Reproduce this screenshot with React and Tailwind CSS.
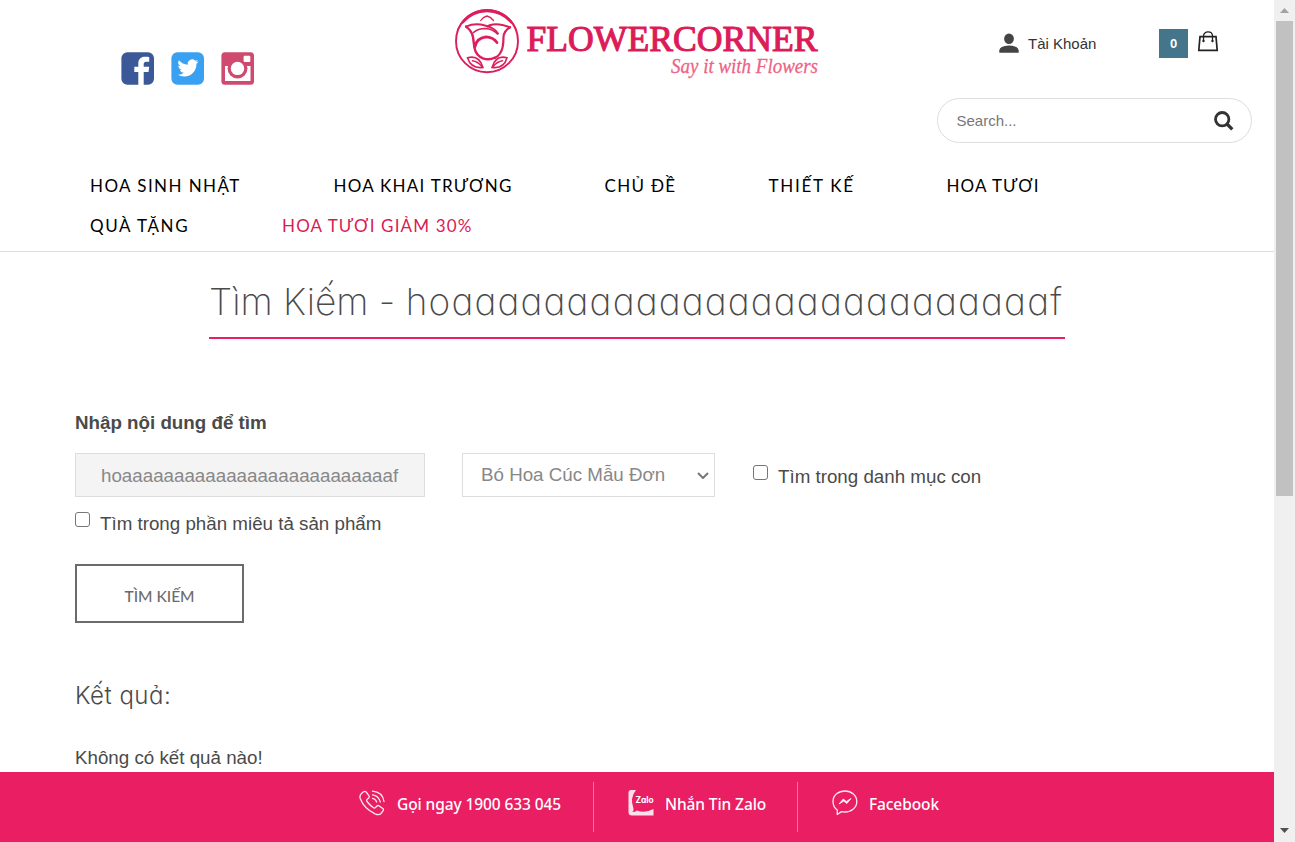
const navRows = [
  [
    { label: "HOA SINH NHẬT", cls: "w-[243.5px] text-black tracking-[1.42px]" },
    { label: "HOA KHAI TRƯƠNG", cls: "w-[271px] text-black tracking-[1.25px]" },
    { label: "CHỦ ĐỀ", cls: "w-[164px] text-black tracking-[1.3px]" },
    { label: "THIẾT KẾ", cls: "w-[178px] text-black tracking-[1.7px]" },
    { label: "HOA TƯƠI", cls: "w-[120px] text-black tracking-[1.1px]" },
  ],
  [
    { label: "QUÀ TẶNG", cls: "w-[192px] text-black tracking-[1.6px]" },
    { label: "HOA TƯƠI GIẢM 30%", cls: "w-[220px] text-[#d81b53] tracking-[1.15px]" },
  ],
];

function Social() {
  return (
    <div className="flex w-[455px] gap-4 pl-[121px] pt-[52px]">
      <svg width="34" height="34" viewBox="0 0 34 34">
        <rect x="0.4" y="0.2" width="32.600" height="32.600" rx="6" fill="#3b5998" />
        <path d="M17.300 33V20H13.300V14.700H17.300V11.500C17.300 7 19.800 4.700 24 4.700C26 4.700 27.500 4.900 28.200 5V9.800H25.500C23.300 9.800 22.700 10.800 22.700 12.300V14.700H28.200L27.500 20H22.700V33z" fill="#fff" />
      </svg>
      <svg width="34" height="34" viewBox="0 0 34 34">
        <rect x="0.4" y="0.2" width="32.600" height="32.600" rx="6" fill="#3aa1f2" />
        <g transform="translate(6.500 5.400) scale(.88)">
          <path fill="#fff" d="M23.950 4.570a10 10 0 0 1-2.820.770 4.960 4.960 0 0 0 2.160-2.720c-.950.550-2 .950-3.130 1.180a4.920 4.920 0 0 0-8.380 4.480C7.690 8.090 4.070 6.130 1.640 3.160a4.920 4.920 0 0 0 1.520 6.570 4.900 4.900 0 0 1-2.230-.610v.060a4.920 4.920 0 0 0 3.950 4.830 4.990 4.990 0 0 1-2.210.080 4.940 4.940 0 0 0 4.600 3.420A9.870 9.870 0 0 1 0 19.540a13.990 13.990 0 0 0 7.560 2.210c9.050 0 14-7.500 14-13.980 0-.210 0-.420-.020-.630a9.940 9.940 0 0 0 2.410-2.570z" />
        </g>
      </svg>
      <svg width="34" height="34" viewBox="0 0 34 34">
        <rect x="0.4" y="0.2" width="32.600" height="32.600" rx="3.500" fill="#cf4a6e" />
        <path d="M4 14H8V17H26V14H29.500V29H4z" fill="#fff" />
        <circle cx="16.500" cy="16.400" r="10" fill="#cf4a6e" />
        <circle cx="16.500" cy="16.400" r="6.700" fill="#fff" />
        <rect x="22.600" y="3.800" width="6.700" height="6.300" rx="1" fill="#fff" />
      </svg>
    </div>
  );
}

function Logo() {
  return (
    <svg width="370" height="96" viewBox="455 0 370 96">
      <path d="M456 33A32 32 0 0 1 518 33A33.200 33.200 0 0 0 456 33z" fill="#dc1f5c" />
      <g fill="none" stroke="#dc1f5c" strokeLinecap="round">
        <circle cx="487" cy="41.200" r="31" strokeWidth="1.900" />
        <path d="M463 22.500A31.500 31.500 0 0 1 511 22.500" strokeWidth="2.600" transform="translate(0 -.5)" />
        <path d="M480.700 20.500Q483 17 487 16Q491 17 493.500 20.500" strokeWidth="1.300" />
        <path d="M466 26.600Q475 22.500 485 25.500Q494 27.500 498 33.500" strokeWidth="2" />
        <path d="M510 27.300Q500 23.500 493 24.500Q489 25 487.500 26.500" strokeWidth="2" />
        <path d="M466 26.600Q472 31 473 37L474.500 48Q476 55.500 483 58.300Q489 60.500 495 57.500" strokeWidth="2.400" />
        <path d="M510 27.300Q504 31 503.500 37Q503.500 49 500 53.500Q498 56.500 495 58" strokeWidth="2.200" />
        <path d="M473.500 32.500Q478 28.500 485 28.500Q493 29 497.500 34" strokeWidth="1.600" />
        <path d="M475 46.500Q476.500 38 486 36.800Q493 37 497 42.500" strokeWidth="2.800" />
        <path d="M467.500 57.800Q479 54.500 483 67.500Q471 69 467.500 57.800ZM472.500 60.800Q477.500 61.500 482 66.500" strokeWidth="1.600" />
        <path d="M507 57.800Q496 54.500 492 67.500Q504 69 507 57.800ZM502.500 60.800Q497.500 61.500 493 66.500" strokeWidth="1.600" />
      </g>
      <text x="526.500" y="51.200" textLength="291" lengthAdjust="spacingAndGlyphs" fill="#dc1c58" stroke="#dc1c58" strokeWidth="1.100" className="font-['Liberation_Serif',serif] text-[35px]">FLOWERCORNER</text>
      <text x="671" y="73" textLength="147" lengthAdjust="spacingAndGlyphs" fill="#ee6384" stroke="#ee6384" strokeWidth=".3" className="font-['Liberation_Serif',serif] text-[22px] italic">Say it with Flowers</text>
    </svg>
  );
}

function Account() {
  return (
    <div className="flex w-[315px] flex-col">
      <div className="flex h-[98px] pl-[61px] pt-[29px]">
        <svg className="mt-[3px]" width="21" height="22" viewBox="0 0 21 22" fill="#444">
          <ellipse cx="11" cy="6.800" rx="4.900" ry="5.200" />
          <path d="M1.300 20.800v-2.300Q1.500 14 11 13.500Q20.500 14 20.700 18.500v2.300z" />
        </svg>
        <span className="ml-[9px] w-[131px] text-[15px] leading-[30px] text-[#333]">Tài Khoản</span>
        <span className="flex h-[29px] w-[29px] items-center justify-center bg-[#44758b] text-[13px] font-bold text-white">0</span>
        <svg className="ml-[10px] mt-px" width="20" height="22" viewBox="0 0 20 22" fill="none" stroke="#222">
          <path d="M2 6.700H18L19.200 20.300H.8z" strokeWidth="1.700" />
          <path d="M5.500 11.500V6C5.500 .5 14.500 .5 14.500 6v5.500" strokeWidth="1.300" />
          <circle cx="5.500" cy="11" r=".8" fill="#222" />
          <circle cx="14.500" cy="11" r=".8" fill="#222" />
        </svg>
      </div>
      <div className="flex h-[45px] items-center justify-between rounded-full border border-[#ddd] pl-[18.500px] pr-[17px]">
        <span className="pt-[2px] text-[15px] text-[#777]">Search...</span>
        <svg width="20" height="20" viewBox="0 0 20 20" fill="none" stroke="#333" strokeWidth="2.800">
          <circle cx="8.200" cy="8.200" r="6.700" />
          <path d="M13 13L18.300 18.300" strokeWidth="3.300" />
        </svg>
      </div>
    </div>
  );
}

function Check({ children, className }) {
  return (
    <label className={className}>
      <span className="h-[15px] w-[15px] shrink-0 rounded-[3px] border border-[#767676] bg-white" />
      <span className="ml-[10px] whitespace-nowrap text-[18.750px] leading-[28px]">{children}</span>
    </label>
  );
}

function PhoneIcon() {
  return (
    <svg width="26" height="26" viewBox="0 0 26 26" fill="none" stroke="#fff" strokeOpacity=".9" strokeWidth="1.300" strokeLinecap="round" strokeLinejoin="round">
      <path d="M2.500 3.500L4.500 1.800Q6 .8 7.200 2L10 5.800Q10.800 7 9.700 8L8 9.500Q7.300 10.300 8 11.500Q11 15.500 14.500 17.800Q15.600 18.500 16.500 17.500L18 16Q19 15 20.200 15.900L23.800 18.500Q25 19.500 24 20.800L22 23.500Q20 25.500 16 23.800Q5 18.500 1.200 8.500Q.3 5.500 2.500 3.500Z" />
      <path d="M13.500 1.200Q23.500 2 25 11.500M13.500 4.800Q19.500 5.500 21.300 12M13.500 8.300Q16.500 8.800 17.700 12" />
    </svg>
  );
}

function ZaloIcon() {
  return (
    <svg width="26" height="26" viewBox="0 0 26 26">
      <path d="M3 0H8Q1.500 8 5.500 18.500Q6 20 4.500 22Q7 22 9 20.500Q17 23.500 25.500 19V25.500H4Q.5 25.500.5 22V3Q.5 0 3 0Z" fill="#fff" fillOpacity=".86" />
      <text x="7.500" y="13.200" textLength="18" lengthAdjust="spacingAndGlyphs" fill="#fff" className="font-[Inter,sans-serif] text-[8.500px] font-bold [font-feature-settings:'cv11']">Zalo</text>
    </svg>
  );
}

function MessengerIcon() {
  return (
    <svg width="26" height="26" viewBox="0 0 26 26" fill="none" stroke="#fff" strokeOpacity=".9" strokeWidth="1.300" strokeLinejoin="round">
      <path d="M5.300 20Q1 17 1 11.500C1 5 6.500 1 13 1S24.800 5.500 24.800 11.500S19.500 22 13 22Q11 22 9.500 21.600L5.200 24.500Z" />
      <path d="M7 14L11.300 9L14.300 11.500L19 8.500L14.800 13.600L11.800 11.100Z" fill="#fff" strokeWidth=".8" />
    </svg>
  );
}

export default function App() {
  return (
    <div className="flex h-[842px] w-[1295px] overflow-hidden bg-white font-['Liberation_Sans',Arial,sans-serif] text-[#4a4a4a]">
      <div className="flex w-[1274px] flex-col">
        <header className="h-[252px] border-b border-[#ddd]">
          <div className="flex h-[166px]">
            <Social />
            <div className="w-[482px]">
              <Logo />
            </div>
            <Account />
          </div>
          <nav className="pl-[90px] font-[Lato,'Open_Sans',sans-serif] text-[17px]">
            {navRows.map((row, i) => (
              <div key={i} className="flex h-10 items-center whitespace-nowrap">
                {row.map((item) => (
                  <a key={item.label} className={item.cls}>{item.label}</a>
                ))}
              </div>
            ))}
          </nav>
        </header>

        <main className="flex h-[520px] flex-col overflow-hidden pl-[75px]">
          <h1 className="ml-[134px] mt-[18px] h-[69px] w-[856px] whitespace-nowrap border-b-2 border-[#e91e63] font-[Inter,sans-serif] text-[37px] font-[250] leading-[64px] [font-feature-settings:'cv11']">
            Tìm Kiếm - <span className="tracking-[1.15px]">hoaaaaaaaaaaaaaaaaaaaaaaaaaaf</span>
          </h1>
          <div className="mt-[70px] text-[18.750px] font-bold leading-[28px]">Nhập nội dung để tìm</div>
          <div className="mt-4 flex h-[44px]">
            <div className="w-[350px] border border-[#ddd] bg-[#f4f4f4] pl-[25px] text-[18.750px] leading-[43px] text-[#888]">hoaaaaaaaaaaaaaaaaaaaaaaaaaaf</div>
            <div className="ml-[37px] flex w-[253px] items-center justify-between border border-[#ddd] pl-[18px] pr-[5px] text-[18.750px] text-[#888]">
              <span>Bó Hoa Cúc Mẫu Đơn</span>
              <svg width="12" height="8" viewBox="0 0 12 8" fill="none" stroke="#777" strokeWidth="2">
                <path d="M1 2L6 7L11 2" />
              </svg>
            </div>
            <Check className="ml-[38px] flex items-start pt-[12px] [&>span:last-child]:mt-[-2px]">Tìm trong danh mục con</Check>
          </div>
          <Check className="mt-[15px] flex items-start [&>span:last-child]:mt-[-2px]">Tìm trong phần miêu tả sản phẩm</Check>
          <button className="mt-[26px] flex h-[59px] w-[169px] shrink-0 items-center justify-center border-2 border-[#6b6b6b] pt-[7px] font-[Lato,sans-serif] text-[15.500px] font-medium text-[#6b6b6b]">TÌM KIẾM</button>
          <h2 className="mt-[55px] font-[Inter,sans-serif] text-[24px] font-light leading-[36px] tracking-[0.5px] [font-feature-settings:'cv11']">Kết quả:</h2>
          <p className="mt-[30px] text-[18.750px] leading-[28px]">Không có kết quả nào!</p>
        </main>

        <footer className="flex h-[70px] bg-[#e91e63] pl-[359px] pt-[10px] font-['Noto_Sans',sans-serif] text-[15.500px] font-medium tracking-[-0.1px] text-white">
          <div className="flex h-[50px] w-[235px] border-r border-white/40 pt-[8px]">
            <PhoneIcon />
            <span className="ml-3 whitespace-nowrap leading-[28px]">Gọi ngay 1900 633 045</span>
          </div>
          <div className="flex h-[50px] w-[204px] border-r border-white/40 pl-[34px] pt-[8px]">
            <ZaloIcon />
            <span className="ml-[11px] whitespace-nowrap leading-[28px]">Nhắn Tin Zalo</span>
          </div>
          <div className="flex h-[50px] pl-[34px] pt-[8px]">
            <MessengerIcon />
            <span className="ml-[11px] whitespace-nowrap leading-[28px]">Facebook</span>
          </div>
        </footer>
      </div>

      <aside className="flex w-[21px] flex-col items-center bg-[#f0f0f0]">
        <div className="flex h-[21px] items-center">
          <svg width="9" height="5" viewBox="0 0 9 5"><path d="M0 5L4.500 0L9 5z" fill="#a3a3a3" /></svg>
        </div>
        <div className="h-[475px] w-[17px] bg-[#c1c1c1]" />
        <div className="mt-auto flex h-[24px] items-center">
          <svg width="9" height="5" viewBox="0 0 9 5"><path d="M0 0L4.500 5L9 0z" fill="#505050" /></svg>
        </div>
      </aside>
    </div>
  );
}
